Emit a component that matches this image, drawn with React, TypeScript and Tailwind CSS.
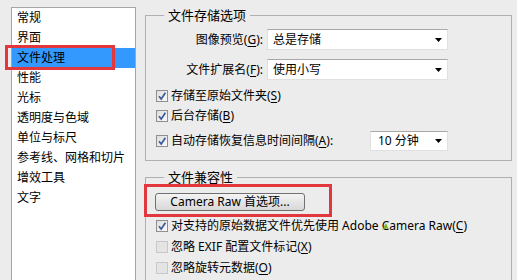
import React from "react";

const listItems = [
  "常规",
  "界面",
  "文件处理",
  "性能",
  "光标",
  "透明度与色域",
  "单位与标尺",
  "参考线、网格和切片",
  "增效工具",
  "文字",
];

function Check({ on }: { on: boolean }) {
  return (
    <span
      className={
        on
          ? "flex h-[12px] w-[12px] shrink-0 items-center justify-center border border-[#8e8f8f] bg-gradient-to-br from-[#dcdcdc] to-[#fbfbfb]"
          : "flex h-[12px] w-[12px] shrink-0 items-center justify-center border border-[#c8c8c8] bg-[#e4e4e4]"
      }
    >
      {on && (
        <svg width="10" height="10" viewBox="0 0 10 10">
          <path d="M2 5.2 L4.2 8 L8.4 1.8" fill="none" stroke="#3b5b9e" strokeWidth="1.7" />
        </svg>
      )}
    </span>
  );
}

function Arrow() {
  return (
    <svg width="7" height="4" viewBox="0 0 7 4" className="shrink-0">
      <path d="M0 0 H7 L3.5 4 Z" fill="#000" />
    </svg>
  );
}

function U({ children }: { children: React.ReactNode }) {
  return <span className="underline underline-offset-2">{children}</span>;
}

export default function App() {
  return (
    <div className="relative flex h-[280px] w-[517px] overflow-hidden bg-[#ececec] font-['Noto_Sans','Noto_Sans_CJK_SC',sans-serif] text-[12px] text-black">
      {/* category list */}
      <div className="ml-[11px] mt-[7px] h-[290px] w-[125px] shrink-0 border border-[#a5a5a5] bg-white">
        {listItems.map((t, i) => (
          <div
            key={t}
            className={
              i === 2
                ? "h-[20px] bg-[#3399ff] pl-[5px] leading-[20px]"
                : "h-[20px] pl-[5px] leading-[20px]"
            }
          >
            {t}
          </div>
        ))}
      </div>

      <div className="ml-[9px] w-[367px] shrink-0">
        {/* 文件存储选项 */}
        <fieldset className="mt-[6px] border border-[#b0b0b0] px-0 pb-[9px]">
          <legend className="ml-[18px] px-[4px] text-[13px] leading-[18px]">文件存储选项</legend>
          <div className="mt-[5px] flex h-[21px] items-center">
            <span className="w-[117px] text-right">
              图像预览(<U>G</U>):
            </span>
            <div className="ml-[4px] flex h-[21px] w-[181px] items-center justify-between border border-[#e0e0e0] border-t-[#a8a8a8] bg-white pl-[5px] pr-[5px]">
              <span>总是存储</span>
              <Arrow />
            </div>
          </div>
          <div className="mt-[9px] flex h-[21px] items-center">
            <span className="w-[117px] text-right">
              文件扩展名(<U>F</U>):
            </span>
            <div className="ml-[4px] flex h-[21px] w-[181px] items-center justify-between border border-[#e0e0e0] border-t-[#a8a8a8] bg-white pl-[5px] pr-[5px]">
              <span>使用小写</span>
              <Arrow />
            </div>
          </div>
          <div className="mt-[6px] flex h-[20px] items-center gap-[3px] pl-[10px]">
            <Check on />
            <span>
              存储至原始文件夹(<U>S</U>)
            </span>
          </div>
          <div className="flex h-[20px] items-center gap-[3px] pl-[10px]">
            <Check on />
            <span>
              后台存储(<U>B</U>)
            </span>
          </div>
          <div className="mt-[5px] flex h-[20px] items-center gap-[3px] pl-[10px]">
            <Check on />
            <span>
              自动存储恢复信息时间间隔(<U>A</U>):
            </span>
            <div className="ml-auto mr-[63px] flex h-[20px] w-[78px] items-center justify-between border border-[#e0e0e0] border-t-[#a8a8a8] bg-white pl-[7px] pr-[5px]">
              <span>10 分钟</span>
              <Arrow />
            </div>
          </div>
        </fieldset>

        {/* 文件兼容性 */}
        <fieldset className="mt-[7px] h-[140px] border border-[#b0b0b0] px-0">
          <legend className="ml-[18px] px-[4px] text-[13px] leading-[18px]">文件兼容性</legend>
          <button
            type="button"
            className="ml-[9px] mt-[7px] flex h-[18px] w-[150px] items-center justify-center rounded-[3px] border border-[#707070] bg-gradient-to-b from-[#f4f4f4] to-[#d8d8d8] text-[12px] leading-none"
          >
            Camera Raw 首选项...
          </button>
          <div className="mt-[4px] flex h-[21px] items-center gap-[3px] pl-[10px]">
            <Check on />
            <span>
              对支持的原始数据文件优先使用 Adobe Camera Raw(<U>C</U>)
            </span>
          </div>
          <div className="flex h-[21px] items-center gap-[3px] pl-[10px]">
            <Check on={false} />
            <span>
              忽略 EXIF 配置文件标记(<U>X</U>)
            </span>
          </div>
          <div className="flex h-[21px] items-center gap-[3px] pl-[10px]">
            <Check on={false} />
            <span>
              忽略旋转元数据(<U>O</U>)
            </span>
          </div>
        </fieldset>
      </div>

      {/* red annotation boxes */}
      <div className="absolute left-[5px] top-[45px] h-[25px] w-[110px] border-[3px] border-[#e2383d]" />
      <div className="absolute left-[144px] top-[184px] h-[33px] w-[188px] border-[3px] border-[#e2383d]" />

      {/* mouse cursor remnant */}
      <svg className="absolute left-[381px] top-[222px]" width="9" height="10" viewBox="0 0 9 10">
        <path d="M1 8 L5 1 L8 8 L5 6 Z" fill="#7fb332" />
      </svg>
    </div>
  );
}
